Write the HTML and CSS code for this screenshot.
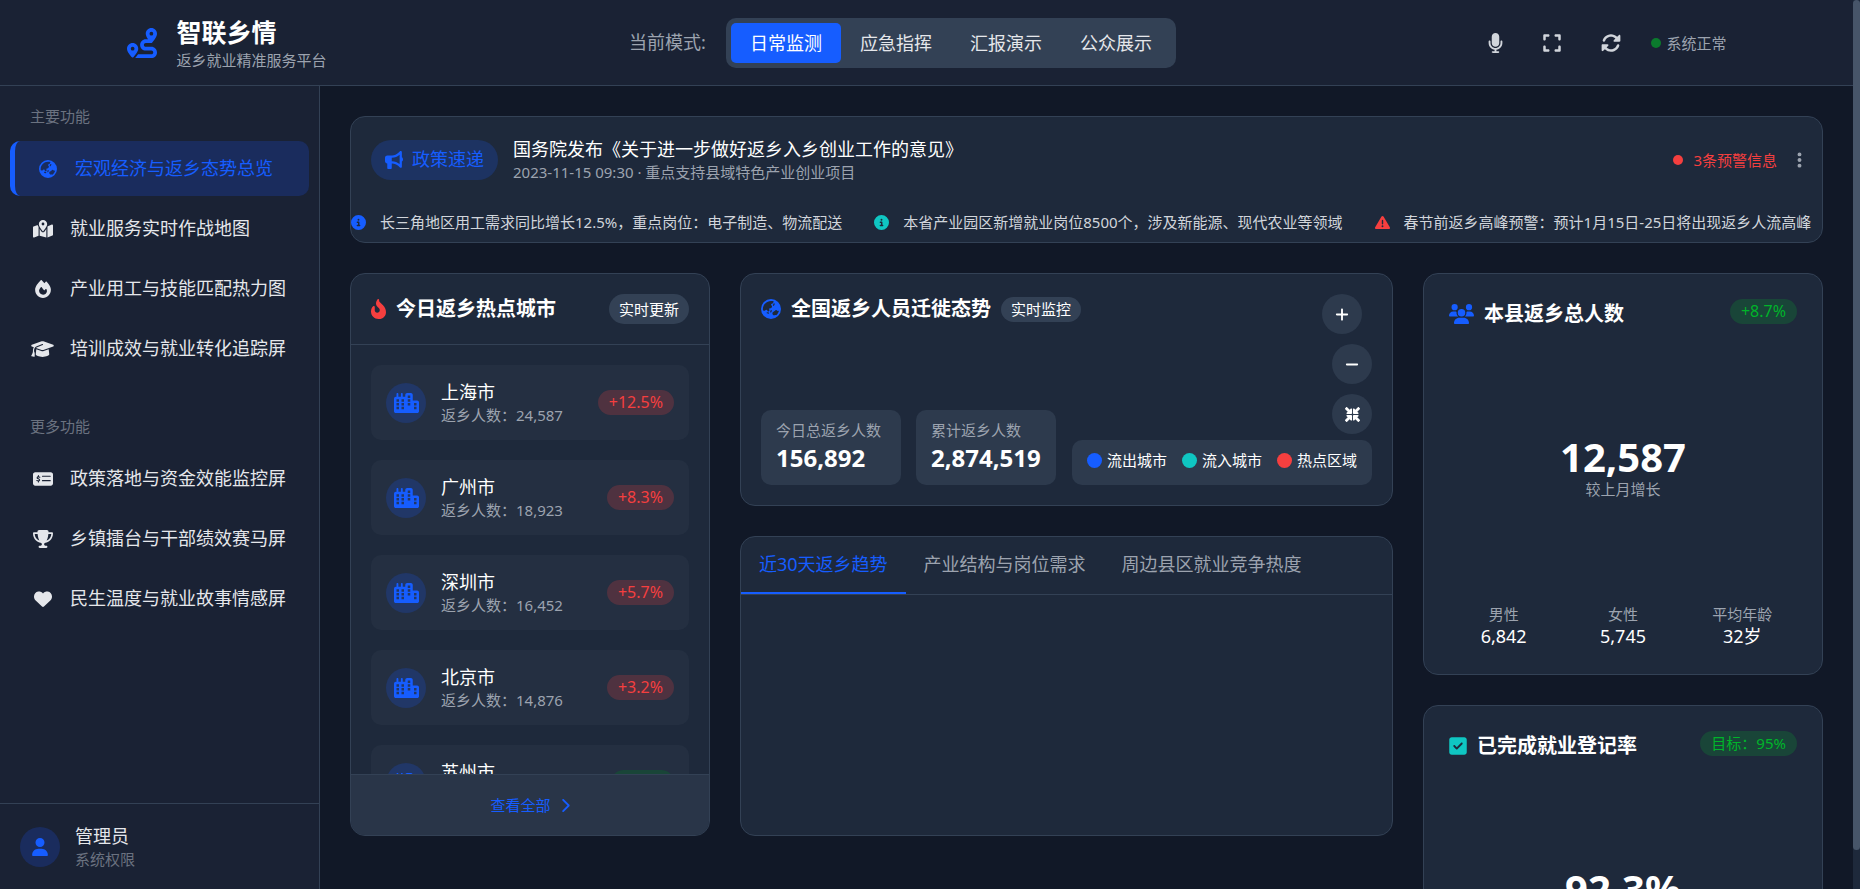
FILE: index.html
```html
<!DOCTYPE html>
<html lang="zh-CN">
<head>
<meta charset="utf-8">
<title>智联乡情 - 返乡就业精准服务平台</title>
<link rel="stylesheet" href="styles.css">
</head>
<body>
<svg class="sprite" aria-hidden="true">
  <symbol id="route" viewBox="0 0 512 512"><path d="M512 96c0 50.2-59.1 125.1-84.6 155c-3.8 4.4-9.4 6.1-14.5 5H320c-17.7 0-32 14.3-32 32s14.3 32 32 32h96c53 0 96 43 96 96s-43 96-96 96H139.6c8.7-9.9 19.3-22.6 30-36.8c6.3-8.4 12.8-17.6 19-27.2H416c17.7 0 32-14.3 32-32s-14.3-32-32-32H320c-53 0-96-43-96-96s43-96 96-96h39.8c-21-31.5-39.8-67.7-39.8-96c0-53 43-96 96-96s96 43 96 96zM117.1 489.1c-3.8 4.3-7.2 8.1-10.1 11.3l-1.8 2-.2-.2c-6 4.6-14.6 4-20-1.8C59.8 473 0 402.5 0 352c0-53 43-96 96-96s96 43 96 96c0 30-21.1 67-43.5 97.9c-10.7 14.7-21.7 28-30.8 38.5l-.6 .7zM128 352a32 32 0 1 0 -64 0 32 32 0 1 0 64 0zM416 128a32 32 0 1 0 0-64 32 32 0 1 0 0 64z"/></symbol>
  <symbol id="mic" viewBox="0 0 384 512"><path d="M192 0C139 0 96 43 96 96V256c0 53 43 96 96 96s96-43 96-96V96c0-53-43-96-96-96zM64 216c0-13.3-10.7-24-24-24s-24 10.7-24 24v40c0 89.1 66.2 162.7 152 174.4V464H120c-13.3 0-24 10.7-24 24s10.7 24 24 24h72 72c13.3 0 24-10.7 24-24s-10.7-24-24-24H216V430.4c85.8-11.7 152-85.3 152-174.4V216c0-13.3-10.7-24-24-24s-24 10.7-24 24v40c0 70.7-57.3 128-128 128s-128-57.3-128-128V216z"/></symbol>
  <symbol id="expand" viewBox="0 0 448 512"><path d="M32 32C14.3 32 0 46.3 0 64v96c0 17.7 14.3 32 32 32s32-14.3 32-32V96h64c17.7 0 32-14.3 32-32s-14.3-32-32-32H32zM64 352c0-17.7-14.3-32-32-32s-32 14.3-32 32v96c0 17.7 14.3 32 32 32h96c17.7 0 32-14.3 32-32s-14.3-32-32-32H64V352zM320 32c-17.7 0-32 14.3-32 32s14.3 32 32 32h64v64c0 17.7 14.3 32 32 32s32-14.3 32-32V64c0-17.7-14.3-32-32-32H320zM448 352c0-17.7-14.3-32-32-32s-32 14.3-32 32v64H320c-17.7 0-32 14.3-32 32s14.3 32 32 32h96c17.7 0 32-14.3 32-32V352z"/></symbol>
  <symbol id="rotate" viewBox="0 0 512 512"><path d="M142.9 142.9c62.2-62.2 162.7-62.5 225.3-1L327 183c-6.9 6.9-8.9 17.2-5.2 26.2s12.5 14.8 22.2 14.8H472c13.3 0 24-10.7 24-24V72c0-9.7-5.8-18.5-14.8-22.2s-19.3-1.7-26.2 5.2L413.4 96.6c-87.6-86.5-228.7-86.2-315.8 1C73.2 122 55.6 150.7 44.8 181.4c-5.9 16.7 2.9 34.9 19.5 40.8s34.9-2.9 40.8-19.5c7.7-21.8 20.2-42.3 37.8-59.8zM16 312V440c0 9.7 5.8 18.5 14.8 22.2s19.3 1.7 26.2-5.2l41.6-41.6c87.6 86.5 228.7 86.2 315.8-1c24.4-24.4 42.1-53.1 52.9-83.7c5.9-16.7-2.9-34.9-19.5-40.8s-34.9 2.9-40.8 19.5c-7.7 21.8-20.2 42.3-37.8 59.8c-62.2 62.2-162.7 62.5-225.3 1L185 329c6.9-6.9 8.9-17.2 5.2-26.2s-12.5-14.8-22.2-14.8H40c-13.3 0-24 10.7-24 24z"/></symbol>
  <symbol id="bullhorn" viewBox="0 0 512 512"><path d="M480 32c0-12.9-7.8-24.6-19.8-29.6s-25.7-2.2-34.9 6.9L381.7 53c-48 48-113.1 75-181 75H192 160 64c-35.3 0-64 28.7-64 64v96c0 35.3 28.7 64 64 64l0 128c0 17.7 14.3 32 32 32h64c17.7 0 32-14.3 32-32V352l8.7 0c67.9 0 133 27 181 75l43.6 43.6c9.2 9.2 22.9 11.9 34.9 6.9s19.8-16.6 19.8-29.6V300.4c18.6-8.8 32-32.5 32-60.4s-13.4-51.6-32-60.4V32zm-64 76.7V240 371.3C357.2 317.8 280.5 288 200.7 288H192V192h8.7c79.8 0 156.5-29.8 215.3-83.3z"/></symbol>
  <symbol id="info" viewBox="0 0 512 512"><path d="M256 512A256 256 0 1 0 256 0a256 256 0 1 0 0 512zM216 336h24V272H216c-13.3 0-24-10.7-24-24s10.7-24 24-24h48c13.3 0 24 10.7 24 24v88h8c13.3 0 24 10.7 24 24s-10.7 24-24 24H216c-13.3 0-24-10.7-24-24s10.7-24 24-24zm40-208a32 32 0 1 1 0 64 32 32 0 1 1 0-64z"/></symbol>
  <symbol id="warning" viewBox="0 0 512 512"><path d="M256 32c14.2 0 27.3 7.5 34.5 19.8l216 368c7.3 12.4 7.3 27.7 .2 40.1S486.3 480 472 480H40c-14.3 0-27.6-7.7-34.7-20.1s-7-27.8 .2-40.1l216-368C228.7 39.5 241.8 32 256 32zm0 128c-13.3 0-24 10.7-24 24V296c0 13.3 10.7 24 24 24s24-10.7 24-24V184c0-13.3-10.7-24-24-24zm32 224a32 32 0 1 0 -64 0 32 32 0 1 0 64 0z"/></symbol>
  <symbol id="dots" viewBox="0 0 128 512"><path d="M64 360a56 56 0 1 0 0 112 56 56 0 1 0 0-112zm0-160a56 56 0 1 0 0 112 56 56 0 1 0 0-112zM120 96A56 56 0 1 0 8 96a56 56 0 1 0 112 0z"/></symbol>
  <symbol id="globe" viewBox="0 0 512 512"><path d="M51.7 295.1l31.7 6.3c7.9 1.6 16-.9 21.7-6.6l15.4-15.4c11.6-11.6 31.1-8.4 38.4 6.2l9.3 18.5c4.8 9.6 14.6 15.7 25.4 15.7c15.2 0 26.1-14.6 21.7-29.2l-6-19.9c-4.6-15.4 6.9-30.9 23-30.9h2.3c13.4 0 25.9-6.7 33.3-17.8l10.7-16.1c5.6-8.5 5.3-19.6-.8-27.7l-16.1-21.5c-10.3-13.7-3.3-33.5 13.4-37.7l17-4.3c7.5-1.9 13.6-7.2 16.5-14.4l16.4-40.9C303.4 52.1 280.2 48 256 48C141.1 48 48 141.1 48 256c0 13.4 1.3 26.5 3.7 39.1zm407.7 4.6c-3-.3-6-.1-9 .8l-15.8 4.4c-6.7 1.9-13.8-.9-17.5-6.7l-2-3.1c-6-9.4-16.4-15.1-27.6-15.1s-21.6 5.7-27.6 15.1l-6.1 9.5c-1.4 2.2-3.4 4.1-5.7 5.3L312 330.1c-18.1 10.1-25.5 32.4-17 51.3l5.5 12.4c8.6 19.2 30.7 28.5 50.5 21.1l2.6-1c10-3.7 21.3-2.2 29.9 4.1l1.5 1.1c37.2-29.5 64.1-71.4 74.4-119.5zM0 256a256 256 0 1 1 512 0A256 256 0 1 1 0 256zm144.5 92.1c-2.1 8.6 3.1 17.3 11.6 19.4l32 8c8.6 2.1 17.3-3.1 19.4-11.6s-3.1-17.3-11.6-19.4l-32-8c-8.6-2.1-17.3 3.1-19.4 11.6zm92-20c-2.1 8.6 3.1 17.3 11.6 19.4s17.3-3.1 19.4-11.6l8-32c2.1-8.6-3.1-17.3-11.6-19.4s-17.3 3.1-19.4 11.6l-8 32zM343.2 113.7c-7.9-4-17.5-.7-21.5 7.2l-16 32c-4 7.9-.7 17.5 7.2 21.5s17.5 .7 21.5-7.2l16-32c4-7.9 .7-17.5-7.2-21.5z"/></symbol>
  <symbol id="map" viewBox="0 0 576 512"><path d="M408 120c0 54.6-73.1 151.9-105.2 192c-7.7 9.6-22 9.6-29.6 0C241.1 271.9 168 174.6 168 120C168 53.7 221.7 0 288 0s120 53.7 120 120zm8 80.4c3.5-6.9 6.7-13.8 9.6-20.6c.5-1.2 1-2.5 1.5-3.7l116-46.4C558.9 123.4 576 135 576 152V422.8c0 9.8-6 18.6-15.1 22.3L416 503V200.4zM137.6 138.3c2.4 14.1 7.2 28.3 12.8 41.5c2.9 6.8 6.1 13.7 9.6 20.6V451.8L32.9 502.7C17.1 509 0 497.4 0 480.4V209.6c0-9.8 6-18.6 15.1-22.3l122.6-49zM327.8 332c13.9-17.4 35.7-45.7 56.2-77V504.3L192 449.4V255c20.5 31.3 42.3 59.6 56.2 77c20.5 25.6 59.1 25.6 79.6 0zM288 152a40 40 0 1 0 0-80 40 40 0 1 0 0 80z"/></symbol>
  <symbol id="fire" viewBox="0 0 448 512"><path d="M159.3 5.4c7.8-7.3 19.9-7.2 27.7 .1c27.6 25.9 53.5 53.8 77.7 84c11-14.4 23.5-30.1 37-42.9c7.9-7.4 20.1-7.4 28 .1c34.6 33 63.9 76.6 84.5 118c20.3 40.8 33.8 82.5 33.8 111.9C448 404.2 348.2 512 224 512C98.4 512 0 404.1 0 276.5c0-38.4 17.8-85.3 45.4-131.7C73.3 97.7 112.7 48.6 159.3 5.4zM225.7 416c25.3 0 47.7-7 68.8-21c42.1-29.4 53.4-88.2 28.1-134.4c-4.5-9-16-9.6-22.5-2l-25.2 29.3c-6.6 7.6-18.5 7.4-24.7-.5c-16.5-21-46-58.5-62.8-79.8c-6.3-8-18.3-8.1-24.7-.1c-33.8 42.5-50.8 69.3-50.8 99.4C112 375.4 162.6 416 225.7 416z"/></symbol>
  <symbol id="flame" viewBox="0 0 384 512"><path d="M153.6 29.9l16-21.3C173.6 3.2 180 0 186.7 0C198.4 0 208 9.6 208 21.3V43.5c0 13.1 5.4 25.7 14.9 34.7L307.6 159C356.4 205.6 384 270.2 384 337.7C384 434 306 512 209.7 512H192C86 512 0 426 0 320v-3.8c0-48.8 19.4-95.6 53.9-130.1l3.5-3.5c4.2-4.2 10-6.6 16-6.6C85.9 176 96 186.1 96 198.6V288c0 35.3 28.7 64 64 64s64-28.7 64-64v-3.9c0-18-7.2-35.3-19.9-48l-38.6-38.6c-24-24-37.5-56.7-37.5-90.7c0-27.7 9-54.8 25.6-76.9z"/></symbol>
  <symbol id="cap" viewBox="0 0 640 512"><path d="M320 32c-8.1 0-16.1 1.4-23.7 4.1L15.8 137.4C6.3 140.9 0 149.9 0 160s6.3 19.1 15.8 22.6l57.9 20.9C57.3 229.3 48 259.8 48 291.9v28.1c0 28.4-10.8 57.7-22.3 80.8c-6.5 13-13.9 25.8-22.5 37.6C0 442.7-.9 448.3 .9 453.4s6 8.9 11.2 10.2l64 16c4.2 1.1 8.7 .3 12.4-2s6.3-6.1 7.1-10.4c8.6-42.8 4.3-81.2-2.1-108.7C90.3 344.3 86 329.8 80 316.5V291.9c0-30.2 10.2-58.7 27.9-81.5c12.9-15.5 29.6-28 49.2-35.7l157-61.7c8.2-3.2 17.5 .8 20.7 9s-.8 17.5-9 20.7l-157 61.7c-12.4 4.9-23.3 12.4-32.2 21.6l159.6 57.6c7.6 2.7 15.6 4.1 23.7 4.1s16.1-1.4 23.7-4.1L624.2 182.6c9.5-3.4 15.8-12.5 15.8-22.6s-6.3-19.1-15.8-22.6L343.7 36.1C336.1 33.4 328.1 32 320 32zM128 408c0 35.3 86 72 192 72s192-36.7 192-72L496.7 262.6 354.5 314c-11.1 4-22.8 6-34.5 6s-23.5-2-34.5-6L143.3 262.6 128 408z"/></symbol>
  <symbol id="check-money" viewBox="0 0 576 512"><path d="M0 128C0 92.7 28.7 64 64 64H512c35.3 0 64 28.7 64 64V384c0 35.3-28.7 64-64 64H64c-35.3 0-64-28.7-64-64V128zM272 192H496c8.8 0 16-7.2 16-16s-7.2-16-16-16H272c-8.8 0-16 7.2-16 16s7.2 16 16 16zM272 320H496c8.8 0 16-7.2 16-16s-7.2-16-16-16H272c-8.8 0-16 7.2-16 16s7.2 16 16 16z" fill-rule="evenodd"/><path d="M196 206c-20-10-38-15-54-12c-28 6-30 40-2 50l28 10c34 12 28 52-4 56c-18 2-38-4-54-12M156 160v34M156 310v34" fill="none" stroke="#1a2234" stroke-width="32" stroke-linecap="round"/></symbol>
  <symbol id="trophy" viewBox="0 0 576 512"><path d="M400 0H176c-26.5 0-48.1 21.8-47.1 48.2c.2 5.3 .4 10.6 .7 15.8H24C10.7 64 0 74.7 0 88c0 92.6 33.5 157 78.5 200.7c44.3 43.1 98.3 64.8 138.1 75.8c23.4 6.5 39.4 26 39.4 45.6c0 20.9-17 37.9-37.9 37.9H192c-17.7 0-32 14.3-32 32s14.3 32 32 32H384c17.7 0 32-14.3 32-32s-14.3-32-32-32H357.9C337 448 320 431 320 410.1c0-19.6 15.9-39.2 39.4-45.6c39.9-11 93.9-32.7 138.2-75.8C542.5 245 576 180.6 576 88c0-13.3-10.7-24-24-24H446.4c.3-5.2 .5-10.4 .7-15.8C448.1 21.8 426.5 0 400 0zM48.9 112h84.4c9.1 90.1 29.2 150.3 51.9 190.6c-24.9-11-50.8-26.5-73.2-48.3c-32-31.1-58-76-63-142.3zM464.1 254.3c-22.4 21.8-48.3 37.3-73.2 48.3c22.7-40.3 42.8-100.5 51.9-190.6h84.4c-5.1 66.3-31.1 111.2-63 142.3z"/></symbol>
  <symbol id="heart" viewBox="0 0 512 512"><path d="M47.6 300.4L228.3 469.1c7.5 7 17.4 10.9 27.7 10.9s20.2-3.9 27.7-10.9L464.4 300.4c30.4-28.3 47.6-68 47.6-109.5v-5.8c0-69.9-50.5-129.5-119.4-141C347 36.5 300.6 51.4 268 84L256 96 244 84c-32.6-32.6-79-47.5-124.6-39.9C50.5 55.6 0 115.2 0 185.1v5.8c0 41.5 17.2 81.2 47.6 109.5z"/></symbol>
  <symbol id="user" viewBox="0 0 448 512"><path d="M224 256A128 128 0 1 0 224 0a128 128 0 1 0 0 256zm-45.7 48C79.8 304 0 383.8 0 482.3C0 498.7 13.3 512 29.7 512H418.3c16.4 0 29.7-13.3 29.7-29.7C448 383.8 368.2 304 269.7 304H178.3z"/></symbol>
  <symbol id="city" viewBox="0 0 640 512"><path fill-rule="evenodd" d="M480 48c0-26.500-21.500-48-48-48H336c-26.500 0-48 21.500-48 48V96H224V24c0-13.300-10.700-24-24-24s-24 10.700-24 24V96H112V24c0-13.300-10.700-24-24-24S64 10.700 64 24V96H48C21.500 96 0 117.500 0 144V464c0 26.500 21.500 48 48 48H592c26.500 0 48-21.500 48-48V240c0-26.500-21.500-48-48-48H480V48zM64 160h64v64H64zM192 160h64v64h-64zM64 256h64v64H64zM192 256h64v64h-64zM64 352h64v64H64zM192 352h64v64h-64zM352 64h64v64h-64zM352 160h64v64h-64zM352 256h64v64h-64zM512 256h64v64h-64zM512 352h64v64h-64z"/></symbol>
  <symbol id="chevron" viewBox="0 0 320 512"><path d="M310.6 233.400c12.500 12.500 12.500 32.800 0 45.300l-192 192c-12.500 12.500-32.800 12.500-45.300 0s-12.500-32.800 0-45.300L242.700 256 73.400 86.600c-12.500-12.500-12.500-32.800 0-45.300s32.800-12.500 45.300 0l192 192z"/></symbol>
  <symbol id="plus" viewBox="0 0 448 512"><path d="M256 80c0-17.700-14.300-32-32-32s-32 14.300-32 32V224H48c-17.700 0-32 14.300-32 32s14.300 32 32 32H192V432c0 17.700 14.300 32 32 32s32-14.300 32-32V288H400c17.700 0 32-14.300 32-32s-14.300-32-32-32H256V80z"/></symbol>
  <symbol id="minus" viewBox="0 0 448 512"><path d="M432 256c0 17.700-14.300 32-32 32L48 288c-17.700 0-32-14.300-32-32s14.300-32 32-32l352 0c17.700 0 32 14.300 32 32z"/></symbol>
  <symbol id="compress" viewBox="0 0 512 512"><path id="inward" d="M439 7c9.400-9.400 24.600-9.400 33.900 0l32 32c9.400 9.400 9.400 24.600 0 33.900l-87 87 39 39c6.900 6.900 8.900 17.200 5.200 26.200s-12.500 14.800-22.200 14.800H296c-13.300 0-24-10.700-24-24V72c0-9.700 5.800-18.500 14.800-22.200s19.300-1.700 26.200 5.200l39 39L439 7zM72 272H216c13.300 0 24 10.700 24 24V440c0 9.700-5.800 18.500-14.800 22.200s-19.300 1.700-26.200-5.200l-39-39L73 505c-9.400 9.400-24.600 9.400-33.900 0L7 473c-9.400-9.400-9.400-24.600 0-33.900l87-87L55 313c-6.900-6.900-8.900-17.200-5.200-26.200s12.500-14.800 22.200-14.800z"/><use href="#inward" transform="matrix(-1 0 0 1 512 0)"/></symbol>
  <symbol id="users" viewBox="0 0 640 512"><path d="M144 0a80 80 0 1 1 0 160A80 80 0 1 1 144 0zM512 0a80 80 0 1 1 0 160A80 80 0 1 1 512 0zM0 298.700C0 239.800 47.800 192 106.700 192h42.700c15.900 0 31 3.500 44.600 9.700c-1.300 7.200-1.900 14.700-1.900 22.300c0 38.200 16.800 72.500 43.300 96H21.300C9.600 320 0 310.400 0 298.700zM405.300 320c26-23.500 42.700-57.800 42.700-96c0-7.600-.7-15-1.900-22.300c13.600-6.300 28.700-9.700 44.600-9.700h42.700C592.200 192 640 239.800 640 298.700c0 11.800-9.600 21.300-21.300 21.300H405.300zM224 224a96 96 0 1 1 192 0 96 96 0 1 1 -192 0zM128 485.300C128 411.700 187.700 352 261.300 352H378.700C452.300 352 512 411.700 512 485.300c0 14.700-11.900 26.700-26.700 26.700H154.700c-14.700 0-26.700-11.900-26.700-26.700z"/></symbol>
  <symbol id="check" viewBox="0 0 448 512"><path d="M64 32C28.700 32 0 60.700 0 96V416c0 35.300 28.700 64 64 64H384c35.300 0 64-28.700 64-64V96c0-35.300-28.700-64-64-64H64zM337 209L209 337c-9.400 9.400-24.600 9.400-33.900 0l-64-64c-9.400-9.400-9.400-24.600 0-33.900s24.600-9.400 33.900 0l47 47L303 175c9.400-9.400 24.600-9.400 33.900 0s9.400 24.600 0 33.900z"/></symbol>
</svg>

<header class="topbar">
  <div class="topbar-inner">
    <div class="brand">
      <svg class="icon brand-icon"><use href="#route"/></svg>
      <div>
        <h1 class="brand-name">智联乡情</h1>
        <p class="brand-sub">返乡就业精准服务平台</p>
      </div>
    </div>
    <div class="modes">
      <span class="modes-label">当前模式:</span>
      <div class="mode-group">
        <button class="mode is-active" type="button">日常监测</button>
        <button class="mode" type="button">应急指挥</button>
        <button class="mode" type="button">汇报演示</button>
        <button class="mode" type="button">公众展示</button>
      </div>
    </div>
    <div class="tools">
      <button class="tool" type="button" aria-label="语音"><svg class="icon w15 h20"><use href="#mic"/></svg></button>
      <button class="tool" type="button" aria-label="全屏"><svg class="icon w18 h20"><use href="#expand"/></svg></button>
      <button class="tool" type="button" aria-label="刷新"><svg class="icon w20 h20"><use href="#rotate"/></svg></button>
      <span class="status"><i class="dot dot-green"></i>系统正常</span>
    </div>
  </div>
</header>

<div class="shell">
  <aside class="sidebar">
    <nav class="nav">
      <h2 class="nav-title">主要功能</h2>
      <a class="nav-item is-active" href="#"><span class="nav-icon"><svg class="icon w18 h18"><use href="#globe"/></svg></span>宏观经济与返乡态势总览</a>
      <a class="nav-item" href="#"><span class="nav-icon"><svg class="icon w20 h18"><use href="#map"/></svg></span>就业服务实时作战地图</a>
      <a class="nav-item" href="#"><span class="nav-icon"><svg class="icon w18 h18"><use href="#fire"/></svg></span>产业用工与技能匹配热力图</a>
      <a class="nav-item" href="#"><span class="nav-icon"><svg class="icon w23 h18"><use href="#cap"/></svg></span>培训成效与就业转化追踪屏</a>
      <h2 class="nav-title nav-title-more">更多功能</h2>
      <a class="nav-item" href="#"><span class="nav-icon"><svg class="icon w20 h18"><use href="#check-money"/></svg></span>政策落地与资金效能监控屏</a>
      <a class="nav-item" href="#"><span class="nav-icon"><svg class="icon w20 h18"><use href="#trophy"/></svg></span>乡镇擂台与干部绩效赛马屏</a>
      <a class="nav-item" href="#"><span class="nav-icon"><svg class="icon w18 h18"><use href="#heart"/></svg></span>民生温度与就业故事情感屏</a>
    </nav>
    <div class="account">
      <span class="avatar"><svg class="icon w18 h18"><use href="#user"/></svg></span>
      <div>
        <p class="account-name">管理员</p>
        <p class="account-role">系统权限</p>
      </div>
    </div>
  </aside>

  <main class="main">
    <section class="card news">
      <div class="news-head">
        <span class="news-tag"><svg class="icon w18 h18"><use href="#bullhorn"/></svg>政策速递</span>
        <div class="news-text">
          <h2 class="news-title">国务院发布《关于进一步做好返乡入乡创业工作的意见》</h2>
          <p class="small muted">2023-11-15 09:30 · 重点支持县域特色产业创业项目</p>
        </div>
        <span class="alerts"><i class="dot dot-red"></i>3条预警信息</span>
        <button class="more" type="button" aria-label="更多"><svg class="icon w5 h18"><use href="#dots"/></svg></button>
      </div>
      <div class="ticker">
        <span class="ticker-item"><svg class="icon w15 h15 blue"><use href="#info"/></svg>长三角地区用工需求同比增长12.5%，重点岗位：电子制造、物流配送</span>
        <span class="ticker-item"><svg class="icon w15 h15 teal"><use href="#info"/></svg>本省产业园区新增就业岗位8500个，涉及新能源、现代农业等领域</span>
        <span class="ticker-item"><svg class="icon w15 h15 red"><use href="#warning"/></svg>春节前返乡高峰预警：预计1月15日-25日将出现返乡人流高峰</span>
      </div>
    </section>

    <div class="board">
      <section class="card cities">
        <div class="cities-head">
          <h3 class="card-title"><svg class="icon w15 h20 red"><use href="#flame"/></svg>今日返乡热点城市</h3>
          <span class="chip chip-tall">实时更新</span>
        </div>
        <ul class="city-list">
          <li class="city"><span class="city-icon"><svg class="icon w25 h20"><use href="#city"/></svg></span><div class="city-text"><p class="city-name">上海市</p><p class="small muted">返乡人数：24,587</p></div><span class="rate rate-red">+12.5%</span></li>
          <li class="city"><span class="city-icon"><svg class="icon w25 h20"><use href="#city"/></svg></span><div class="city-text"><p class="city-name">广州市</p><p class="small muted">返乡人数：18,923</p></div><span class="rate rate-red">+8.3%</span></li>
          <li class="city"><span class="city-icon"><svg class="icon w25 h20"><use href="#city"/></svg></span><div class="city-text"><p class="city-name">深圳市</p><p class="small muted">返乡人数：16,452</p></div><span class="rate rate-red">+5.7%</span></li>
          <li class="city"><span class="city-icon"><svg class="icon w25 h20"><use href="#city"/></svg></span><div class="city-text"><p class="city-name">北京市</p><p class="small muted">返乡人数：14,876</p></div><span class="rate rate-red">+3.2%</span></li>
          <li class="city"><span class="city-icon"><svg class="icon w25 h20"><use href="#city"/></svg></span><div class="city-text"><p class="city-name">苏州市</p><p class="small muted">返乡人数：12,543</p></div><span class="rate rate-green">-1.2%</span></li>
        </ul>
        <a class="cities-foot" href="#">查看全部<svg class="icon w10 h15"><use href="#chevron"/></svg></a>
      </section>

      <div class="center">
        <section class="card flow">
          <div class="flow-left">
            <div class="flow-head">
              <h3 class="card-title"><svg class="icon w20 h20 blue"><use href="#globe"/></svg>全国返乡人员迁徙态势</h3>
              <span class="chip">实时监控</span>
            </div>
            <div class="flow-stats">
              <div class="stat"><p class="small muted">今日总返乡人数</p><p class="stat-value">156,892</p></div>
              <div class="stat"><p class="small muted">累计返乡人数</p><p class="stat-value">2,874,519</p></div>
            </div>
          </div>
          <div class="flow-right">
            <div class="zoom">
              <button class="round round-first" type="button" aria-label="放大"><svg class="icon w14 h15"><use href="#plus"/></svg></button>
              <button class="round" type="button" aria-label="缩小"><svg class="icon w14 h15"><use href="#minus"/></svg></button>
              <button class="round" type="button" aria-label="还原"><svg class="icon w15 h15"><use href="#compress"/></svg></button>
            </div>
            <div class="legend">
              <span class="legend-item"><i class="swatch bg-blue"></i>流出城市</span>
              <span class="legend-item"><i class="swatch bg-teal"></i>流入城市</span>
              <span class="legend-item"><i class="swatch bg-red"></i>热点区域</span>
            </div>
          </div>
        </section>
        <section class="card trend">
          <div class="tabs" role="tablist">
            <button class="tab is-active" type="button" role="tab" aria-selected="true">近30天返乡趋势</button>
            <button class="tab" type="button" role="tab" aria-selected="false">产业结构与岗位需求</button>
            <button class="tab" type="button" role="tab" aria-selected="false">周边县区就业竞争热度</button>
          </div>
        </section>
      </div>

      <div class="side">
        <section class="card kpi">
          <div class="kpi-head">
            <h3 class="card-title"><svg class="icon w25 h20 blue"><use href="#users"/></svg>本县返乡总人数</h3>
            <span class="rate rate-green">+8.7%</span>
          </div>
          <div class="kpi-main"><p class="kpi-value">12,587</p><p class="small muted">较上月增长</p></div>
          <div class="kpi-stats">
            <div><p class="small muted">男性</p><p class="kpi-num">6,842</p></div>
            <div><p class="small muted">女性</p><p class="kpi-num">5,745</p></div>
            <div><p class="small muted">平均年龄</p><p class="kpi-num">32岁</p></div>
          </div>
        </section>
        <section class="card kpi kpi-rate">
          <div class="kpi-head">
            <h3 class="card-title"><svg class="icon w18 h20 teal"><use href="#check"/></svg>已完成就业登记率</h3>
            <span class="rate rate-green">目标：95%</span>
          </div>
          <div class="kpi-main"><p class="kpi-value">92.3%</p></div>
        </section>
      </div>
    </div>
  </main>
</div>
<div class="scrollbar" aria-hidden="true"><div class="scrollbar-thumb"></div></div>
</body>
</html>
```

FILE: styles.css
```css
:root {
  --bg: #111827;
  --panel: #1a2234;
  --card: #1e293b;
  --line: #334155;
  --chip: #334155;
  --tile: #2d3a4d;
  --blue: #165dff;
  --teal: #0fc6c2;
  --red: #f53f3f;
  --green: #00b42a;
  --text: #e5e7eb;
  --muted: #9ca3af;
  --dim: #6b7280;
}

* { box-sizing: border-box; margin: 0; padding: 0; }

html { background: var(--bg); scrollbar-width: none; }

body {
  padding-right: 7px;
  background: var(--bg);
  color: var(--text);
  font-family: "Noto Sans", "Noto Sans CJK SC", sans-serif;
  font-size: 18px;
  line-height: 25px;
}

button { font: inherit; color: inherit; background: none; border: 0; cursor: pointer; }
a { color: inherit; text-decoration: none; }
ul { list-style: none; }
i { font-style: normal; }

/* Slim page scrollbar */
.scrollbar { position: fixed; top: 0; right: 0; bottom: 0; z-index: 20; width: 7px; background: #1e293b; }
.scrollbar-thumb { height: 95.6%; border-radius: 4px; background: #475569; }

.sprite { display: none; }
.icon { display: block; flex: none; fill: currentColor; }
.w5 { width: 5px; }
.w10 { width: 10px; }
.w14 { width: 14px; }
.w15 { width: 15px; }
.w18 { width: 18px; }
.w20 { width: 20px; }
.w23 { width: 23px; }
.w25 { width: 25px; }
.h15 { height: 15px; }
.h18 { height: 18px; }
.h20 { height: 20px; }

.blue { color: var(--blue); }
.teal { color: var(--teal); }
.red { color: var(--red); }
.small { font-size: 15px; line-height: 20px; }
.muted { color: var(--muted); }

/* Top bar */
.topbar {
  position: sticky;
  top: 0;
  z-index: 10;
  margin-right: -7px;
  padding-right: 7px;
  background: var(--panel);
  border-bottom: 1px solid var(--line);
}
.topbar-inner {
  display: flex;
  align-items: center;
  justify-content: space-between;
  max-width: 1600px;
  margin: 0 auto;
  padding: 15px 0;
}
.brand { display: flex; align-items: center; gap: 20px; }
.brand-icon { width: 30px; height: 30px; color: var(--blue); }
.brand-name { color: #fff; font-size: 25px; line-height: 35px; font-weight: 700; }
.brand-sub { color: var(--muted); font-size: 15px; line-height: 20px; }

.modes { display: flex; align-items: center; gap: 20px; }
.modes-label { color: var(--muted); }
.mode-group { display: flex; padding: 5px; border-radius: 10px; background: var(--chip); }
.mode { padding: 0 19px; line-height: 40px; border-radius: 5px; }
.mode.is-active { background: var(--blue); color: #fff; }

.tools { display: flex; align-items: center; gap: 20px; color: #d1d5db; }
.tool { padding: 10px; }
.status { display: flex; align-items: center; gap: 5px; color: var(--muted); font-size: 15px; line-height: 20px; }
.dot { width: 10px; height: 10px; border-radius: 50%; }
.dot-green { background: #0b7a2d; }
.dot-red { background: var(--red); }

/* Layout */
.shell { display: grid; grid-template-columns: 320px minmax(0, 1fr); align-items: start; }

.sidebar {
  position: sticky;
  top: 86px;
  display: flex;
  flex-direction: column;
  height: calc(100vh - 86px);
  background: var(--panel);
  border-right: 1px solid var(--line);
}
.nav { flex: 1; min-height: 0; padding: 20px 10px; }
.nav-title { padding: 0 20px; margin-bottom: 15px; color: var(--dim); font-size: 15px; line-height: 20px; font-weight: 400; }
.nav-title-more { margin-top: 40px; }
.nav-item { display: flex; align-items: center; gap: 15px; height: 55px; padding: 0 20px; border-radius: 10px; white-space: nowrap; }
.nav-item + .nav-item { margin-top: 5px; }
.nav-item.is-active { background: #1a2c5d; border-left: 5px solid var(--blue); color: var(--blue); }
.nav-icon { display: flex; justify-content: center; width: 25px; }

.account { display: flex; align-items: center; gap: 15px; padding: 20px; border-top: 1px solid var(--line); }
.avatar { display: flex; align-items: center; justify-content: center; width: 40px; height: 40px; border-radius: 50%; background: #1a2c5d; color: var(--blue); }
.account-role { color: var(--dim); font-size: 15px; line-height: 20px; }

.main { padding: 30px; }
.card { background: var(--card); border: 1px solid var(--line); border-radius: 15px; overflow: hidden; }
.card-title { display: flex; align-items: center; gap: 10px; color: #fff; font-size: 20px; line-height: 30px; font-weight: 700; white-space: nowrap; }

/* News */
.news { margin-bottom: 30px; }
.news-head { display: flex; align-items: center; padding: 20px; }
.news-tag { display: flex; align-items: center; gap: 9px; height: 40px; padding: 0 14px; margin-right: 15px; border-radius: 20px; background: #1d3362; color: var(--blue); }
.news-text { flex: 1; }
.news-title { color: #fff; font-size: 18px; line-height: 25px; font-weight: 400; }
.alerts { display: flex; align-items: center; gap: 10px; color: var(--red); font-size: 15px; line-height: 20px; }
.more { margin-left: 20px; color: var(--muted); }
.ticker { display: flex; gap: 32px; padding: 10px 0; color: #d1d5db; font-size: 15px; line-height: 20px; white-space: nowrap; }
.ticker-item { display: flex; align-items: center; gap: 14px; }

/* Board */
.board { display: grid; grid-template-columns: 360px minmax(0, 1fr) 400px; gap: 30px; align-items: start; }

.cities-head { display: flex; align-items: center; justify-content: space-between; padding: 20px; border-bottom: 1px solid var(--line); }
.chip { flex: none; padding: 0 10px; border-radius: 15px; background: var(--chip); color: #fff; font-size: 15px; line-height: 25px; white-space: nowrap; }
.chip-tall { line-height: 30px; }
.city-list { display: grid; gap: 20px; height: 429px; padding: 20px; overflow: hidden; }
.city { display: flex; align-items: center; gap: 15px; height: 75px; padding: 15px; border-radius: 10px; background: #242f41; }
.city-icon { display: flex; align-items: center; justify-content: center; width: 40px; height: 40px; border-radius: 50%; background: #213767; color: var(--blue); }
.city-text { flex: 1; }
.city-name { color: #fff; }
.rate { padding: 0 11px; border-radius: 13px; font-size: 16px; line-height: 25px; white-space: nowrap; }
.rate-red { background: #4f3240; color: var(--red); }
.rate-green { background: #194538; color: var(--green); }
.kpi-rate .rate { font-size: 15px; }
.cities-foot { display: flex; align-items: center; justify-content: center; gap: 9px; height: 61px; border-top: 1px solid var(--line); background: #293548; color: var(--blue); font-size: 15px; }

.center { display: flex; flex-direction: column; gap: 30px; align-self: start; }
.flow { display: flex; padding: 20px; }
.flow-left { display: flex; flex: 1; flex-direction: column; justify-content: space-between; min-width: 0; }
.flow-head { display: flex; align-items: center; gap: 10px; }
.flow-head .card-title { flex: none; }
.flow-stats { display: flex; gap: 15px; }
.stat { min-width: 140px; padding: 10px 15px; border-radius: 10px; background: var(--tile); }
.stat-value { color: #fff; font-size: 24px; line-height: 35px; font-weight: 700; }
.flow-right { display: flex; flex: none; flex-direction: column; align-items: flex-end; gap: 6px; }
.zoom { display: flex; flex-direction: column; align-items: flex-end; gap: 10px; }
.round { display: flex; align-items: center; justify-content: center; width: 40px; height: 40px; border-radius: 50%; background: var(--tile); color: #fff; }
.round-first { margin-right: 10px; }
.legend { display: flex; gap: 15px; padding: 10px 15px 15px; border-radius: 10px; background: var(--tile); color: #fff; }
.legend-item { display: flex; align-items: center; gap: 5px; font-size: 15px; line-height: 20px; white-space: nowrap; }
.swatch { width: 15px; height: 15px; border-radius: 50%; }
.bg-blue { background: var(--blue); }
.bg-teal { background: var(--teal); }
.bg-red { background: var(--red); }

.trend { min-height: 300px; }
.tabs { display: flex; border-bottom: 1px solid var(--line); }
.tab { padding: 15px 18px; border-bottom: 2px solid transparent; color: var(--muted); white-space: nowrap; }
.tab.is-active { border-color: var(--blue); color: var(--blue); }

.side { display: flex; flex-direction: column; gap: 30px; max-height: 627px; overflow-y: auto; scrollbar-width: none; }
.kpi { display: flex; flex: none; flex-direction: column; justify-content: space-between; min-height: 402px; padding: 25px; }
.kpi-head { display: flex; align-items: flex-start; justify-content: space-between; }
.kpi-main { text-align: center; }
.kpi-value { color: #fff; font-size: 40px; line-height: 45px; font-weight: 700; }
.kpi-stats { display: grid; grid-template-columns: repeat(3, 1fr); gap: 10px; text-align: center; }
.kpi-num { color: #fff; }
.kpi-rate { justify-content: flex-start; gap: 105px; }
```
